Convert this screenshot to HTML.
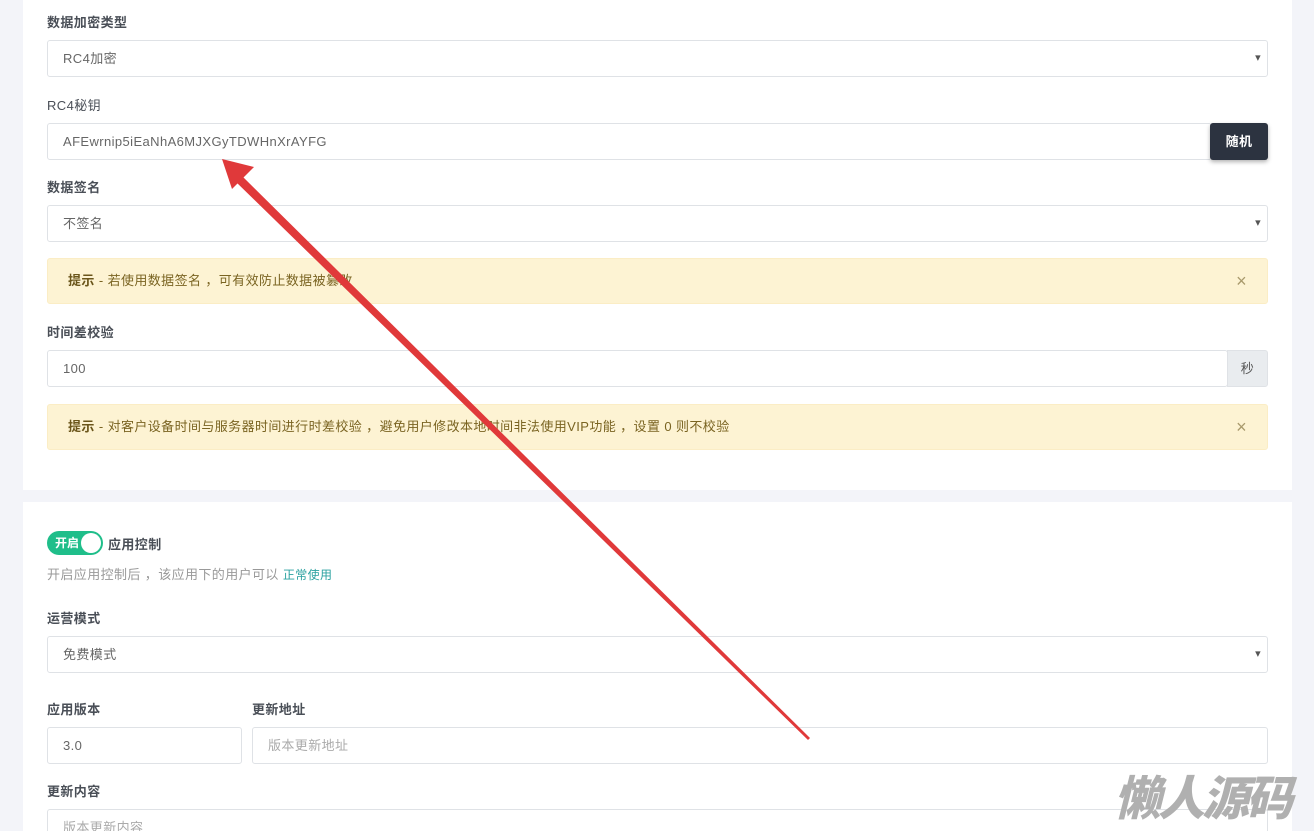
<!DOCTYPE html>
<html><head><meta charset="utf-8"><style>
*{box-sizing:border-box;margin:0;padding:0}
html,body{width:1314px;height:831px;overflow:hidden}
body{background:#f3f4f9;font-family:"Liberation Sans","Noto Sans CJK SC",sans-serif;font-size:13px;color:#555;position:relative;letter-spacing:0.4px}
.card{position:absolute;left:23px;width:1269px;background:#fff}
.lbl{position:absolute;left:47px;font-size:13px;font-weight:bold;color:#4a4f57}
.inp{position:absolute;left:47px;height:37px;border:1px solid #dfe2e6;border-radius:3px;background:#fff;padding-left:15px;line-height:35px;color:#666;font-size:13px}
.sel::after{content:"▾";position:absolute;right:6px;top:0;font-size:11px;color:#555}
.alert{position:absolute;left:47px;width:1221px;height:46px;background:#fdf3d3;border:1px solid #fbedc5;border-radius:3px;line-height:44px;padding-left:20px;color:#7a6422;font-size:13px}
.alert b{color:#6b561b}
.alert .x{position:absolute;right:20px;top:0;font-size:18px;color:#a99a6c}
.ph{color:#aaa}
</style></head><body>
<div class="card" style="top:0;height:490px"></div>
<div class="card" style="top:502px;height:340px"></div>

<div class="lbl" style="top:12px">数据加密类型</div>
<div class="inp sel" style="top:40px;width:1221px">RC4加密</div>
<div class="lbl" style="top:95px;font-weight:normal;color:#4a4f57">RC4秘钥</div>
<div class="inp" style="top:123px;width:1165px">AFEwrnip5iEaNhA6MJXGyTDWHnXrAYFG</div>
<div style="position:absolute;left:1210px;top:123px;width:58px;height:37px;background:#2c3340;border-radius:3px;color:#fff;text-align:center;line-height:37px;font-weight:bold;box-shadow:0 2px 4px rgba(0,0,0,.3)">随机</div>
<div class="lbl" style="top:177px">数据签名</div>
<div class="inp sel" style="top:205px;width:1221px">不签名</div>
<div class="alert" style="top:258px"><b>提示</b> - 若使用数据签名 ，可有效防止数据被篡改<span class="x">×</span></div>
<div class="lbl" style="top:322px">时间差校验</div>
<div class="inp" style="top:350px;width:1181px">100</div>
<div style="position:absolute;left:1227px;top:350px;width:41px;height:37px;background:#e9ecef;border:1px solid #dfe2e6;border-radius:0 3px 3px 0;text-align:center;line-height:35px;color:#555">秒</div>
<div class="alert" style="top:404px"><b>提示</b> - 对客户设备时间与服务器时间进行时差校验 ，避免用户修改本地时间非法使用VIP功能 ，设置 0 则不校验<span class="x">×</span></div>

<div style="position:absolute;left:47px;top:531px;width:56px;height:24px;border-radius:12px;background:#1fbe8a;color:#fff;font-size:12px;font-weight:bold;line-height:24px;padding-left:8px;letter-spacing:0">开启<span style="position:absolute;right:2px;top:2px;width:20px;height:20px;border-radius:50%;background:#fff"></span></div>
<div class="lbl" style="left:108px;top:534px">应用控制</div>
<div style="position:absolute;left:47px;top:564px;color:#999;font-size:13px">开启应用控制后 ，该应用下的用户可以 <span style="color:#2aa1a0;font-size:12px">正常使用</span></div>
<div class="lbl" style="top:608px">运营模式</div>
<div class="inp sel" style="top:636px;width:1221px">免费模式</div>
<div class="lbl" style="top:699px">应用版本</div>
<div class="lbl" style="left:252px;top:699px">更新地址</div>
<div class="inp" style="top:727px;width:195px">3.0</div>
<div class="inp ph" style="left:252px;top:727px;width:1016px">版本更新地址</div>
<div class="lbl" style="top:781px">更新内容</div>
<div class="inp ph" style="top:809px;width:1221px;height:40px">版本更新内容</div>

<div style="position:absolute;left:1114px;top:765px;font-size:47px;font-weight:900;font-style:italic;color:#b0b0b0;letter-spacing:-3px;font-family:'Noto Sans CJK SC',sans-serif;line-height:60px">懒人源码</div>

<svg style="position:absolute;left:0;top:0" width="1314" height="831">
<polygon points="810,738 808,740 235,181 241,175" fill="#e0393a"/>
<polygon points="222,159 254,167 232,189" fill="#e0393a"/>
</svg>
</body></html>
